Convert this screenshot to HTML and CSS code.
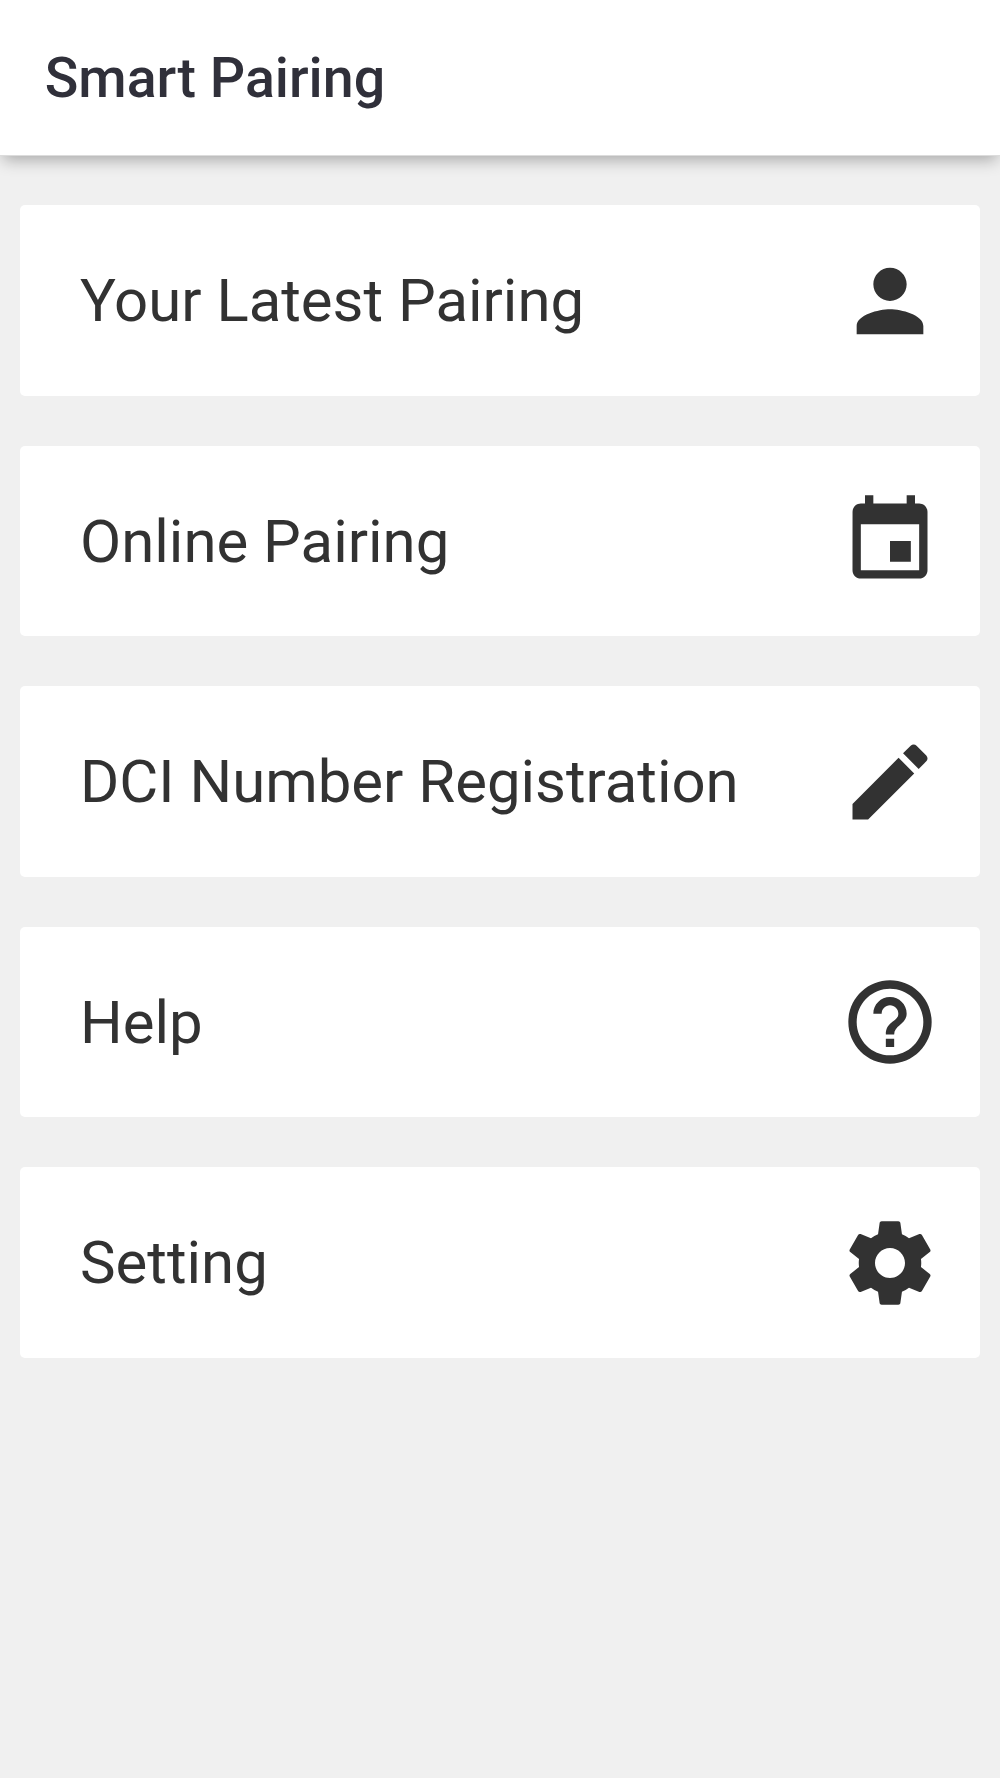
FILE: index.html
```html
<!DOCTYPE html>
<html lang="en">
<head>
    <meta charset="UTF-8">
    <meta name="viewport" content="width=device-width, initial-scale=1.0">
    <title>Smart Pairing</title>
    <link rel="stylesheet" href="styles.css">
</head>
<body>
    <header class="toolbar">
        <h1>Smart Pairing</h1>
    </header>
    <main class="menu">
        <a class="card">
            <span>Your Latest Pairing</span>
            <svg class="icon" viewBox="0 0 24 24"><path d="M12 12c2.210 0 4-1.790 4-4s-1.790-4-4-4-4 1.790-4 4 1.790 4 4 4zm0 2c-2.670 0-8 1.340-8 4v2h16v-2c0-2.660-5.330-4-8-4z"/></svg>
        </a>
        <a class="card">
            <span>Online Pairing</span>
            <svg class="icon" viewBox="0 0 24 24"><path d="M17 12h-5v5h5v-5zM16 1v2H8V1H6v2H5c-1.110 0-1.990.9-1.990 2L3 19c0 1.100.89 2 2 2h14c1.100 0 2-.9 2-2V5c0-1.100-.9-2-2-2h-1V1h-2zm3 18H5V8h14v11z"/></svg>
        </a>
        <a class="card">
            <span>DCI Number Registration</span>
            <svg class="icon" viewBox="0 0 24 24"><path d="M3 17.250V21h3.750L17.810 9.940l-3.750-3.750L3 17.250zM20.710 7.040c.39-.39.39-1.020 0-1.410l-2.340-2.340c-.39-.39-1.020-.39-1.410 0l-1.830 1.830 3.750 3.750 1.830-1.830z"/></svg>
        </a>
        <a class="card">
            <span>Help</span>
            <svg class="icon" viewBox="0 0 24 24"><path d="M11 18h2v-2h-2v2zm1-16C6.480 2 2 6.480 2 12s4.480 10 10 10 10-4.480 10-10S17.520 2 12 2zm0 18c-4.410 0-8-3.590-8-8s3.590-8 8-8 8 3.590 8 8-3.590 8-8 8zm0-14c-2.210 0-4 1.790-4 4h2c0-1.100.9-2 2-2s2 .9 2 2c0 2-3 1.750-3 5h2c0-2.250 3-2.500 3-5 0-2.210-1.790-4-4-4z"/></svg>
        </a>
        <a class="card">
            <span>Setting</span>
            <svg class="icon" viewBox="0 0 24 24"><path d="M19.430 12.980c.04-.32.07-.64.07-.98s-.03-.66-.07-.98l2.110-1.650c.19-.15.24-.42.12-.64l-2-3.460c-.12-.22-.39-.3-.61-.22l-2.490 1c-.52-.4-1.080-.73-1.690-.98l-.38-2.650C14.460 2.180 14.250 2 14 2h-4c-.25 0-.46.18-.49.42l-.38 2.650c-.61.25-1.170.59-1.690.98l-2.490-1c-.23-.09-.49 0-.61.22l-2 3.460c-.13.22-.07.49.12.64l2.110 1.650c-.04.32-.07.65-.07.98s.03.66.07.98l-2.110 1.650c-.19.15-.24.42-.12.64l2 3.460c.12.22.39.3.61.22l2.490-1c.52.4 1.080.73 1.690.98l.38 2.650c.03.24.24.42.49.42h4c.25 0 .46-.18.49-.42l.38-2.650c.61-.25 1.170-.59 1.690-.98l2.490 1c.23.09.49 0 .61-.22l2-3.460c.12-.22.07-.49-.12-.64l-2.110-1.650zM12 15.600c-1.980 0-3.600-1.620-3.600-3.600s1.620-3.600 3.600-3.600 3.600 1.620 3.600 3.600-1.620 3.600-3.600 3.600z"/></svg>
        </a>
    </main>
</body>
</html>
```

FILE: styles.css
```css
body {
    font-family: Roboto, sans-serif;
    background-color: #f0f0f0;
    color: #323232;
    margin: 0;
}
.toolbar {
    display: flex;
    align-items: center;
    box-sizing: border-box;
    height: 156px;
    padding: 1px 44.7px 0;
    border-bottom: 1px solid #dcdcdc;
    background-color: #fff;
    box-shadow: 0 7px 15px -3px rgba(0, 0, 0, 0.3);
}
h1 {
    margin: 0;
    font-size: 55.5px;
    font-weight: 500;
    color: #30303a;
}
.menu {
    display: flex;
    flex-direction: column;
    gap: 50px;
    padding: 49.3px 20px;
}
.card {
    display: flex;
    align-items: center;
    justify-content: space-between;
    height: 190.5px;
    padding: 0 40px 0 60px;
    border-radius: 5px;
    background-color: #fff;
    font-size: 59.9px;
}
.icon {
    width: 100px;
    height: 100px;
    fill: #323232;
}
```
